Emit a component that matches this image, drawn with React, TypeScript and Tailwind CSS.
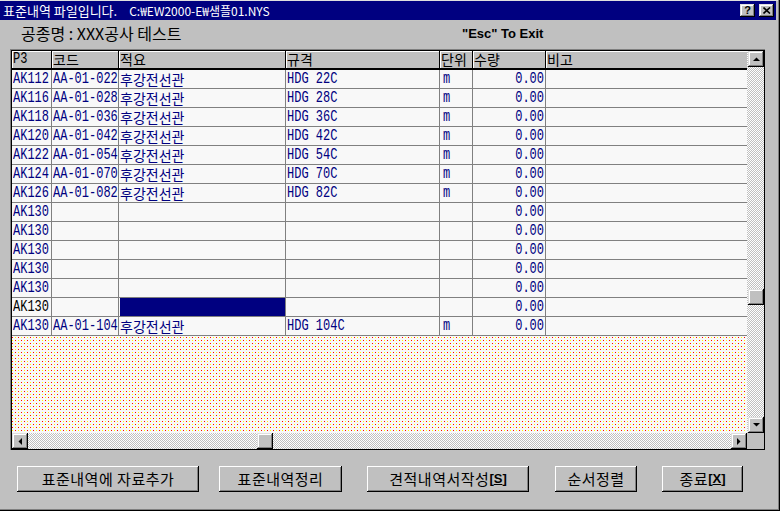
import React from "react";

const KR = "font-['Noto_Sans_CJK_KR',sans-serif]";
const MONO = "font-['Liberation_Mono','Noto_Sans_CJK_KR',monospace]";

const raised =
  "bg-[#c0c0c0] shadow-[inset_-1px_-1px_#000,inset_1px_1px_#dfdfdf,inset_-2px_-2px_#808080,inset_2px_2px_#fff]";
const checker =
  "[background-image:repeating-conic-gradient(#c0c0c0_0_25%,#ffffff_0_50%)] [background-size:2px_2px]";

type Row = { p: string; code?: string; name?: string; spec?: string; unit?: string; sel?: boolean };

const rows: Row[] = [
  { p: "AK112", code: "AA-01-022", name: "후강전선관", spec: "HDG 22C", unit: "m" },
  { p: "AK116", code: "AA-01-028", name: "후강전선관", spec: "HDG 28C", unit: "m" },
  { p: "AK118", code: "AA-01-036", name: "후강전선관", spec: "HDG 36C", unit: "m" },
  { p: "AK120", code: "AA-01-042", name: "후강전선관", spec: "HDG 42C", unit: "m" },
  { p: "AK122", code: "AA-01-054", name: "후강전선관", spec: "HDG 54C", unit: "m" },
  { p: "AK124", code: "AA-01-070", name: "후강전선관", spec: "HDG 70C", unit: "m" },
  { p: "AK126", code: "AA-01-082", name: "후강전선관", spec: "HDG 82C", unit: "m" },
  { p: "AK130" },
  { p: "AK130" },
  { p: "AK130" },
  { p: "AK130" },
  { p: "AK130" },
  { p: "AK130", sel: true },
  { p: "AK130", code: "AA-01-104", name: "후강전선관", spec: "HDG 104C", unit: "m" },
];

// bitmap-ish tall narrow latin text
function Tall({ children }: { children: React.ReactNode }) {
  return <span className="inline-block scale-y-[1.35] origin-center whitespace-pre">{children}</span>;
}

function Arrow({ dir }: { dir: "up" | "down" | "left" | "right" }) {
  const pts = {
    up: "0,4 7,4 3.5,0.5",
    down: "0,0 7,0 3.5,3.5",
    left: "4,0 4,7 0.5,3.5",
    right: "0,0 0,7 3.5,3.5",
  }[dir];
  const vertical = dir === "up" || dir === "down";
  return (
    <svg width={vertical ? 7 : 4} height={vertical ? 4 : 7} viewBox={vertical ? "0 0 7 4" : "0 0 4 7"}>
      <polygon points={pts} fill="#000" />
    </svg>
  );
}

function ScrollBtn({ dir }: { dir: "up" | "down" | "left" | "right" }) {
  return (
    <div className={`${raised} w-[16px] h-[16px] shrink-0 flex items-center justify-center`}>
      <Arrow dir={dir} />
    </div>
  );
}

function Btn({ left, width, children }: { left: number; width: string; children: React.ReactNode }) {
  return (
    <div
      style={{ marginLeft: left }}
      className={`${width} h-[26px] flex items-center justify-center bg-[#c0c0c0] shadow-[inset_-1px_-1px_#000,inset_1px_1px_#fff,inset_-2px_-2px_#808080] ${KR} text-[15px] tracking-[0.5px] text-black`}
    >
      {children}
    </div>
  );
}

function Dotted() {
  return (
    <svg className="block w-full h-full" shapeRendering="crispEdges">
      <defs>
        <pattern id="dots" width="6" height="6" patternUnits="userSpaceOnUse">
          <rect width="6" height="6" fill="#f8f8f8" />
          <rect x="0" y="1" width="1" height="1" fill="#ff0000" />
          <rect x="3" y="1" width="1" height="1" fill="#ffff00" />
          <rect x="0" y="4" width="1" height="1" fill="#ffff00" />
          <rect x="3" y="4" width="1" height="1" fill="#ff0000" />
        </pattern>
      </defs>
      <rect width="100%" height="100%" fill="url(#dots)" />
    </svg>
  );
}

export default function App() {
  return (
    <div className="w-[780px] h-[511px] bg-[#c0c0c0] flex flex-col shadow-[inset_-1px_-1px_#000,inset_-2px_-2px_#808080,inset_0_1px_#dfdfdf] overflow-hidden">
      {/* title bar */}
      <div className="mt-[1px] mr-[4px] h-[19px] bg-[#000080] flex items-center pl-[3px] pr-[2px]">
        <span className={`${KR} text-[13px] text-white leading-none`}>표준내역 파일입니다.</span>
        <span className={`${KR} text-[12px] text-white leading-none ml-[12px]`}>C:₩EW2000-E₩샘플01.NYS</span>
        <div className="ml-auto flex gap-[4px]">
          <div className={`${raised} w-[15px] h-[13px] flex items-center justify-center font-['Liberation_Sans',sans-serif] font-bold text-[11px] leading-none text-black`}>
            ?
          </div>
          <div className={`${raised} w-[15px] h-[13px] flex items-center justify-center`}>
            <svg width="8" height="7" viewBox="0 0 8 7">
              <path d="M0.5 0.5 L7 6.5 M7 0.5 L0.5 6.5" stroke="#000" strokeWidth="1.6" />
            </svg>
          </div>
        </div>
      </div>

      {/* info row */}
      <div className="h-[29px] flex items-center pb-[3px]">
        <span className={`${KR} text-[16px] text-black w-[462px] pl-[21px] leading-none`}>
          공종명 : XXX공사 테스트
        </span>
        <span className="font-['Liberation_Sans',sans-serif] font-bold text-[13px] text-black leading-none">
          "Esc" To Exit
        </span>
      </div>

      {/* grid */}
      <div className="ml-[10px] w-[755px] h-[401px] border-t border-l border-[#808080]">
        <div className="w-[754px] h-[400px] border border-black flex flex-col">
          <div className="flex h-[382px]">
            <div className="w-[735px] flex flex-col">
              {/* header */}
              <div className="h-[19px] flex border-b-2 border-black bg-[#c0c0c0] text-black">
                <div className={`w-[40px] h-[17px] leading-[17px] pl-[1px] shadow-[inset_1px_1px_#fff] border-r border-black ${MONO} text-[12px]`}>
                  <Tall>P3</Tall>
                </div>
                {[
                  ["코드", "w-[67px]"],
                  ["적요", "w-[167px]"],
                  ["규격", "w-[154px]"],
                  ["단위", "w-[33px]"],
                  ["수량", "w-[73px]"],
                  ["비고", "flex-1"],
                ].map(([t, w], i) => (
                  <div
                    key={t}
                    className={`${w} ${KR} text-[14px] h-[17px] leading-[17px] pl-[1px] shadow-[inset_1px_1px_#fff] ${i < 5 ? "border-r border-black" : ""}`}
                  >
                    {t}
                  </div>
                ))}
              </div>
              {/* rows */}
              {rows.map((r, i) => (
                <div key={i} className="h-[19px] flex border-b border-[#808080] bg-[#f8f8f8] text-[#000080]">
                  <div className={`w-[40px] border-r border-[#808080] pl-[1px] ${MONO} text-[12px] leading-[18px] ${r.sel ? "text-black" : ""}`}>
                    <Tall>{r.p}</Tall>
                  </div>
                  <div className={`w-[67px] border-r border-[#808080] pl-[1px] ${MONO} text-[12px] leading-[18px]`}>
                    {r.code && <Tall>{r.code}</Tall>}
                  </div>
                  <div
                    className={`w-[167px] border-r border-[#808080] pl-[1px] ${KR} text-[14px] leading-[18px] ${r.sel ? "bg-[#000080] shadow-[inset_1px_0_#f8f8f8]" : ""}`}
                  >
                    {r.name}
                  </div>
                  <div className={`w-[154px] border-r border-[#808080] pl-[1px] ${MONO} text-[12px] leading-[18px]`}>
                    {r.spec && <Tall>{r.spec}</Tall>}
                  </div>
                  <div className={`w-[33px] border-r border-[#808080] pl-[3px] ${MONO} text-[12px] leading-[18px]`}>
                    {r.unit && <Tall>{r.unit}</Tall>}
                  </div>
                  <div className={`w-[73px] border-r border-[#808080] pr-[1px] text-right ${MONO} text-[12px] leading-[18px]`}>
                    <Tall>0.00</Tall>
                  </div>
                  <div className="flex-1" />
                </div>
              ))}
              <div className="flex-1 min-h-0">
                <Dotted />
              </div>
            </div>
            {/* vertical scrollbar */}
            <div className={`w-[17px] flex flex-col ${checker}`}>
              <div className="ml-[1px]">
                <ScrollBtn dir="up" />
              </div>
              <div className="h-[221px] mt-[1px]" />
              <div className={`${raised} ml-[1px] w-[16px] h-[16px]`} />
              <div className="flex-1" />
              <div className="ml-[1px]">
                <ScrollBtn dir="down" />
              </div>
            </div>
          </div>
          {/* horizontal scrollbar */}
          <div className="flex h-[16px]">
            <div className={`w-[735px] flex ${checker}`}>
              <ScrollBtn dir="left" />
              <div className="w-[229px]" />
              <div className={`${raised} w-[16px] h-[16px]`} />
              <div className="flex-1" />
              <ScrollBtn dir="right" />
            </div>
            <div className="flex-1 bg-[#c0c0c0]" />
          </div>
        </div>
      </div>

      {/* buttons */}
      <div className="flex mt-[16px]">
        <Btn left={17} width="w-[182px]">표준내역에 자료추가</Btn>
        <Btn left={20} width="w-[123px]">표준내역정리</Btn>
        <Btn left={25} width="w-[162px]">
          견적내역서작성
          <b className="font-['Liberation_Sans',sans-serif] text-[13px] tracking-normal">
            [<u>S</u>]
          </b>
        </Btn>
        <Btn left={26} width="w-[82px]">순서정렬</Btn>
        <Btn left={25} width="w-[81px]">
          종료
          <b className="font-['Liberation_Sans',sans-serif] text-[13px] tracking-normal">
            [<u>X</u>]
          </b>
        </Btn>
      </div>
    </div>
  );
}
